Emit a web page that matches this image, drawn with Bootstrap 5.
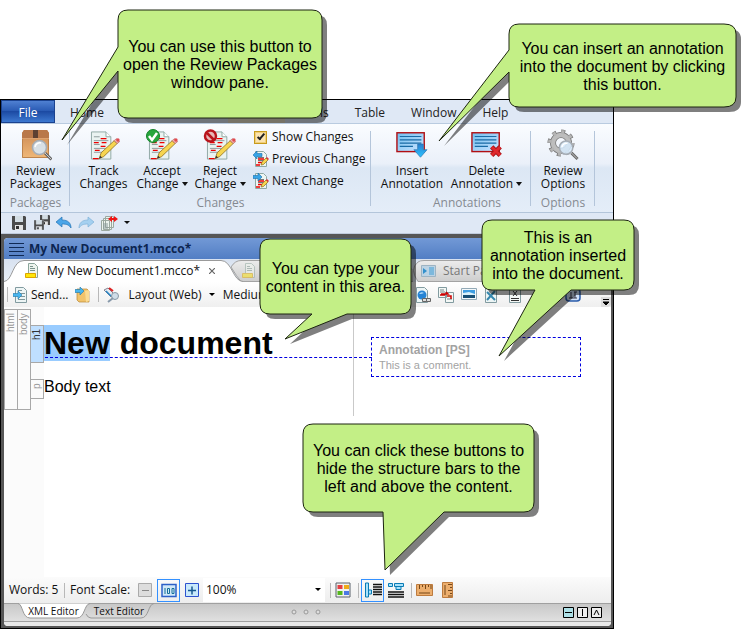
<!DOCTYPE html>
<html lang="en">
<head>
<meta charset="utf-8">
<meta name="viewport" content="width=device-width, initial-scale=1">
<title>My New Document1.mcco*</title>
<link href="https://cdn.jsdelivr.net/npm/bootstrap@5.3.0/dist/css/bootstrap.min.css" rel="stylesheet">
<style>
body{font:12px/16px "Open Sans","Noto Sans",sans-serif;color:#111;background:#fff}
button,select{font:inherit;color:inherit;background:none;border:0;padding:0}
svg{flex:none;display:block}
.stage{min-height:100vh;padding:99px 137px 0 0}
.app{border:1px solid #000;min-height:calc(100vh - 99px);background:#565656}
.menu-bar{background:#dfe8f5;height:23px;gap:26px}
.menu-bar .nav-link{padding:0;line-height:26px;color:#222}
.menu-bar .file-tab{width:54px;text-align:center;color:#fff;background:linear-gradient(#4f80d2,#2b5cb5 45%,#1c4aa3 50%,#3c78d0);border:1px solid #1b428f;line-height:24px}
.menu-bar .home-tab{margin-left:-11px}
.menu-bar .tab-current{width:57px;background:#efe6cf;margin-left:98px;margin-right:-12px}
.ribbon{border-top:1px solid #b9cbe0;border-bottom:1px solid #b3c5da;height:90px;background:linear-gradient(#fafcff,#eaf0f9 45%,#dce7f4 50%,#e4edf8)}
.group{position:relative;display:flex;flex-direction:column;height:100%;padding-top:5px}
.group::after{content:"";position:absolute;right:0;top:7px;bottom:6px;width:1px;background:#b4c5da}
.group-name{color:#858a91;text-align:center;line-height:16px}
.tool{display:flex;flex-direction:column;align-items:center;line-height:13px;white-space:nowrap;height:66px}
.tool span{padding-top:3px}
.caret{display:inline-block;border:3px solid transparent;border-top:4px solid #111;border-bottom:0;vertical-align:2px;margin-left:3px}
.small-list{margin-top:-3px}
.small-tool{display:flex;align-items:center;gap:3px;height:22px;line-height:22px;white-space:nowrap}
.small-tool input{appearance:none;width:13px;height:13px;margin:0 2px 0 1px;border:1px solid #c79a1d;outline:1px solid #f0cf7a;outline-offset:-2px;background:#fbe3b0;position:relative}
.small-tool input::after{content:"";position:absolute;left:4px;top:0;width:4px;height:8px;border:solid #222;border-width:0 2px 2px 0;transform:rotate(40deg)}
.quick{background:#dfe8f5;height:21px;border-bottom:1px solid #c0cbdc}
.doc{margin:4px 2px 2px 3px;display:flex;flex-direction:column;flex:1;background:#fff;border-radius:4px;overflow:hidden}
.doc-title{background:linear-gradient(#7299d6,#527ec4);height:21px;font-weight:700;color:#0c2550;line-height:21px;gap:5px}
.doc-tabs{height:23px;background:linear-gradient(#d8e2f0,#e8eef6)}
.doc-tab{position:relative;height:23px;display:flex;align-items:center}
.doc-tab>*,.edit-tab>span{position:relative}
.doc-tab>.shape,.edit-tab>.shape{position:absolute;left:0;top:0;width:100%;height:100%}
.toolbar{height:25px;background:linear-gradient(#fff,#efefef)}
.vsep{width:1px;height:15px;background:#b8b8b8;flex:none}
.editor{flex:1;display:grid;grid-template-columns:40px 309px 1fr;font-family:"Liberation Sans",Arial,sans-serif}
.bars{background:#fbfbfb;display:grid;grid-template-columns:13px 13px 14px;grid-template-rows:2px 101px 1fr}
.bar{border:1px solid #a8a8a8;writing-mode:vertical-rl;transform:rotate(180deg);font-size:10px;line-height:12px;color:#999;text-align:right;padding:3px 0;grid-row:2;margin-right:-1px}
.inner-bars{grid-row:2;padding-top:16px;display:flex;flex-direction:column;gap:16px}
.inner-bars .bar{margin-right:0}
.bar-h1{background:#bfdfff;height:38px;color:#333}
.bar-p{height:20px}
h1{font-size:32px;line-height:36px;font-weight:700;margin:18px 0 17px;color:#000}
.picked{background:#99ccff;color:#000;display:inline-block;margin-right:1px}
.body-text{font-size:16px;line-height:18px;margin:0;color:#000}
.margin-col{border-left:1px solid #c9c9c9;height:109px;padding:30px 30px 0 17px}
.note{border:1px dashed #0000e0;height:40px;padding:5px 7px;position:relative;color:#a3a3a3;font-size:11px;line-height:15px}
.note::before{content:"";position:absolute;right:100%;top:19px;width:327px;border-top:1px dashed #0000e0}
.note strong{font-size:12px;display:block}
.status{height:26px;background:linear-gradient(#fbfbfb,#ededed)}
.on{border:1px solid #3390ff;height:23px;width:23px;display:flex;align-items:center;justify-content:center}
.zoom-box{width:122px;height:24px;background:#fff}
.zoom-box select{appearance:none;flex:1;outline:0;padding-left:3px}
.edit-bar{height:19px;background:linear-gradient(#c8c8c8,#e0e0e0);border-top:1px solid #a0a0a0;border-bottom:1px solid #a0a0a0;font-size:10px}
.edit-tab{height:15px;width:69px;line-height:15px}
.grip{margin-left:141px}
.foot{height:4px;background:#e9e9e9}
.callout-box{position:absolute;display:flex;align-items:center;justify-content:center;text-align:center;font:16px/18px "Liberation Sans",Arial,sans-serif;color:#000;white-space:nowrap;z-index:5}
.callout-box svg{position:absolute;left:0;top:0;overflow:visible;width:1px;height:1px}
.callout-box p{position:relative;margin:0;padding-top:2px}
.callout-box .shade{fill:#000;fill-opacity:.5;transform:translate(5px,5px)}
.callout-box .face{fill:#c3ef86;stroke:#1c2410;stroke-width:1}
.c1{left:118px;top:10px;width:204px;height:108px}
.c2{left:509px;top:24px;width:227px;height:83px}
.c3{left:260px;top:239px;width:151px;height:75px}
.c4{left:482px;top:220px;width:152px;height:70px}
.c5{left:303px;top:424px;width:231px;height:88px}
</style>
<script src="https://cdn.jsdelivr.net/npm/bootstrap@5.3.0/dist/js/bootstrap.bundle.min.js"></script>
</head>
<body>
<svg width="0" height="0" class="position-absolute">
<defs>
<linearGradient id="gBox" x2="0" y2="1"><stop stop-color="#c98752"/><stop offset="1" stop-color="#f0b878"/></linearGradient>
<linearGradient id="gScr" x2="1" y2="1"><stop stop-color="#6fc0f0"/><stop offset="1" stop-color="#cfe4ff"/></linearGradient>
<linearGradient id="gArr" x2="0" y2="1"><stop stop-color="#2a7fd0"/><stop offset="1" stop-color="#2bc4ff"/></linearGradient>
<linearGradient id="gTab" x2="0" y2="1"><stop stop-color="#ececec"/><stop offset="1" stop-color="#cdcdcd"/></linearGradient>
<symbol id="page" viewBox="0 0 32 32"><path d="M1.500 2.500h15l5 5v23h-20z" fill="#eaf3f1" stroke="#8fa8a4"/><path d="M16.500 2.500v5h5" fill="#fff" stroke="#8fa8a4"/><path d="M4 7.500h6M4 11.500h15M4 15.500h6M4 19.500h12M4 23.500h10" stroke="#8d9a9c"/><path d="M11 9.500h6M4 13.500h5M12 13.500h5M11 17.500h5M3 30h6M5 21.500h5" stroke="#e00" stroke-width="1.300"/><path d="M9.500 30l2-6L25 11.500l3 3L14 28z" fill="#f6d550" stroke="#8d6b1c" stroke-width=".8"/><path d="M25 11.500l2-2 3.500 3-2.500 2z" fill="#f5b9b2" stroke="#a44" stroke-width=".6"/><circle cx="28.800" cy="10.800" r="1.800" fill="#e04a50"/><path d="M9.500 30l1-3 2 1.800z" fill="#333"/></symbol>
<symbol id="spage" viewBox="0 0 16 16"><path d="M2.500.5h8l3 3v12h-11z" fill="#edf5f3" stroke="#8fa8a4"/><path d="M5 6.500h6M5 9.500h5" stroke="#777"/><path d="M5 8h6M5 11.500h4M3 14h4" stroke="#e00" stroke-width="1.300"/><path d="M8 14l1-3 4-4 2 2-4.500 4.500z" fill="#f6d550" stroke="#8d6b1c" stroke-width=".7"/><path d="M13 7l1-1 2 2-1 1z" fill="#d33"/></symbol>
<symbol id="screen" viewBox="0 0 34 30"><rect x="1" y="1" width="29" height="20" fill="url(#gScr)" stroke="#b00f14" stroke-width="1.500"/><path d="M4 5h23M4 8.500h23M4 12h23M4 15.500h14" stroke="#196ba5" stroke-width="1.200"/></symbol>
<symbol id="disk" viewBox="0 0 14 14"><path d="M0 0h13l1 1v13H1l-1-1z" fill="#4b4b4b"/><path d="M3 0h8v6H3z" fill="#d3dde3"/><path d="M3 9h8v5H3z" fill="#e4e4e4"/><path d="M4 10h3v3H4z" fill="#333"/></symbol>
<symbol id="tdoc" viewBox="0 0 14 16"><path d="M3.500.5h6l3 3v11h-9z" fill="#eef4ee" stroke="#8ba59b"/><path d="M5 3.500h3M5 5.500h5M5 7.500h5" stroke="#79928b"/><path d="M.5 10.500h10v4H.5z" fill="#ffe60a" stroke="#dca600"/></symbol>
<symbol id="lens" viewBox="0 0 22 22"><path d="M14 14l6.500 6.500" stroke="#666" stroke-width="3"/><path d="M14 14l6 6" stroke="#ccc"/><circle cx="8.500" cy="8.500" r="7" fill="#d6eafb" fill-opacity=".85" stroke="#a6adb5" stroke-width="1.600"/><path d="M4 8a5 5 0 0 1 6-4" stroke="#fff" fill="none" stroke-width="1.500"/></symbol>
</defs>
</svg>
<div class="stage position-relative">
<main class="app d-flex flex-column">
  <nav class="menu-bar d-flex" aria-label="Main menu">
    <a class="nav-link file-tab" href="#">File</a>
    <a class="nav-link home-tab" href="#">Home</a>
    <a class="nav-link tab-current" href="#" aria-label="Review"></a>
    <a class="nav-link" href="#">Tools</a>
    <a class="nav-link" href="#">Table</a>
    <a class="nav-link" href="#">Window</a>
    <a class="nav-link" href="#">Help</a>
  </nav>
  <section class="ribbon d-flex" aria-label="Ribbon">
    <div class="group" style="width:69px">
      <button class="tool" type="button"><svg width="32" height="32" viewBox="0 0 32 32"><path d="M2 4l2-3h23l2 3v25H2z" fill="url(#gBox)"/><path d="M2 4l2-3h23l2 3v5H2z" fill="#b9784a"/><path d="M13 1h5v9h-5z" fill="#5d4032"/><path d="M2 9.500h27" stroke="#dda270"/><path d="M2.500 10v18.500h26V10" fill="none" stroke="#bd834c"/><use href="#lens" x="11" y="10" width="22" height="22"/></svg><span>Review<br>Packages</span></button>
      <div class="group-name">Packages</div>
    </div>
    <div class="group" style="width:301px">
      <div class="d-flex">
        <button class="tool" type="button" style="width:67px"><svg width="32" height="32" viewBox="-2 0 32 32"><use href="#page" width="31" height="32"/></svg><span>Track<br>Changes</span></button>
        <button class="tool" type="button" style="width:50px"><svg width="34" height="32" viewBox="0 0 34 32"><use href="#page" x="3" width="31" height="32"/><circle cx="8" cy="7" r="6.500" fill="#27a63c" stroke="#14802a"/><path d="M4 7l3 4 5-7" fill="none" stroke="#fff" stroke-width="2.500"/></svg><span>Accept<br>Change<i class="caret"></i></span></button>
        <button class="tool" type="button" style="width:66px"><svg width="34" height="32" viewBox="0 0 34 32"><use href="#page" x="3" width="31" height="32"/><circle cx="7.500" cy="7" r="5.500" fill="#e8b7b7" stroke="#b9141c" stroke-width="2.500"/><path d="M4 4l7 7" stroke="#b9141c" stroke-width="2.500"/></svg><span>Reject<br>Change<i class="caret"></i></span></button>
        <div class="small-list">
          <label class="small-tool"><input type="checkbox" checked>Show Changes</label>
          <button class="small-tool" type="button"><svg width="16" height="16" viewBox="0 0 16 16"><use href="#spage"/><path d="M0 4l4-4v2.500h5v3H4V8z" fill="#37a4e6" stroke="#1c71ad" stroke-width=".6"/></svg>Previous Change</button>
          <button class="small-tool" type="button"><svg width="16" height="16" viewBox="0 0 16 16"><use href="#spage"/><path d="M9 4L5 0v2.500H0v3h5V8z" fill="#37a4e6" stroke="#1c71ad" stroke-width=".6"/></svg>Next Change</button>
        </div>
      </div>
      <div class="group-name">Changes</div>
    </div>
    <div class="group" style="width:160px">
      <div class="d-flex">
        <button class="tool" type="button" style="width:82px"><svg width="32" height="32" viewBox="0 0 34 32"><use href="#screen" y="2" width="34" height="30"/><path d="M23 15h6v6h4l-7 8-7-8h4z" fill="url(#gArr)" stroke="#2872ae" stroke-width=".7"/></svg><span>Insert<br>Annotation</span></button>
        <button class="tool" type="button" style="width:67px"><svg width="32" height="32" viewBox="0 0 34 32"><use href="#screen" y="2" width="34" height="30"/><path d="M22 18l9 9M31 18l-9 9" stroke="#a51317" stroke-width="5"/><path d="M22 18l9 9M31 18l-9 9" stroke="#e0282d" stroke-width="3"/></svg><span>Delete<br>Annotation<i class="caret"></i></span></button>
      </div>
      <div class="group-name ps-3 ms-3">Annotations</div>
    </div>
    <div class="group" style="width:64px">
      <button class="tool" type="button"><svg width="32" height="32" viewBox="0 0 32 32"><circle cx="14" cy="14" r="11.500" fill="none" stroke="#777" stroke-width="4" stroke-dasharray="4 5"/><circle cx="14" cy="14" r="8" fill="none" stroke="#777" stroke-width="6"/><circle cx="14" cy="14" r="8" fill="none" stroke="#bdbdbd" stroke-width="4.500"/><circle cx="14" cy="14" r="11" fill="none" stroke="#b4b4b4" stroke-width="4" stroke-dasharray="3 5.640"/><use href="#lens" x="11" y="10" width="21" height="22"/></svg><span>Review<br>Options</span></button>
      <div class="group-name">Options</div>
    </div>
  </section>
  <div class="quick d-flex align-items-center" style="padding-left:11px;gap:6px">
    <button type="button" aria-label="Save"><svg width="14" height="14"><use href="#disk"/></svg></button>
    <button type="button" aria-label="Save all"><svg width="18" height="16" viewBox="-2 0 18 16"><use href="#disk" x="6" y="0" width="10" height="10"/><use href="#disk" x="0" y="5" width="10" height="10" stroke="#dfe8f5" stroke-width=".5"/></svg></button>
    <button type="button" aria-label="Undo"><svg width="16" height="14" viewBox="0 0 16 14"><path d="M0 6l6-5v3c6 0 9 3 9 8-2-3-4-4-9-4v3z" fill="#4aa5e8" stroke="#2373b5" stroke-width=".7"/></svg></button>
    <button type="button" aria-label="Redo"><svg width="16" height="14" viewBox="0 0 16 14"><path d="M16 6l-6-5v3c-6 0-9 3-9 8 2-3 4-4 9-4v3z" fill="#a5d0f0" stroke="#7fb2d9" stroke-width=".7"/></svg></button>
    <button type="button" aria-label="Close all"><svg width="18" height="16" viewBox="0 0 18 16"><path d="M5.500 1.500h8v11h-8zM3.500 3.500h8v11h-8zM1.500 5.500h8v10h-8z" fill="#edf3ee" stroke="#9ba8a0"/><path d="M3 9h5M3 11h5M3 13h5" stroke="#899"/><path d="M8 4l4-3v2h2V1l4 3-4 3V5h-2v2z" fill="#f01515"/></svg></button>
    <button type="button" aria-label="More commands"><svg width="6" height="4"><path d="M0 0h6L3 3z" fill="#111"/></svg></button>
  </div>
  <article class="doc">
    <div class="doc-title d-flex align-items-center"><svg width="20" height="14" viewBox="0 0 20 14"><path d="M5 1.500h15M5 5.500h15M5 9.500h15M5 13.500h15" stroke="#102a55"/></svg><span>My New Document1.mcco*</span></div>
    <div class="doc-tabs d-flex" role="tablist">
      <button class="doc-tab" type="button" role="tab" style="width:227px;padding-left:21px;padding-right:16px;z-index:2"><svg class="shape overflow-visible" viewBox="0 0 227 23" preserveAspectRatio="none"><path d="M0 22.500C9 22 8 1.500 20 1.500h197c11 0 12 21 22 21v.5H0z" fill="#fff"/><path d="M0 22.500C9 22 8 1.500 20 1.500h197c11 0 12 21 22 21" fill="none" stroke="#9a9a9a"/></svg><svg width="14" height="16"><use href="#tdoc"/></svg><span class="ms-2">My New Document1.mcco*</span><svg width="6" height="6" viewBox="0 0 6 6" class="ms-auto"><path d="M0 0l6 6M6 0L0 6" stroke="#666" stroke-width="1.200"/></svg></button>
      <button class="doc-tab" type="button" role="tab" aria-label="Document" style="width:182px;padding-left:11px"><svg class="shape" viewBox="0 0 182 23" preserveAspectRatio="none"><path d="M0 8Q4 1.500 10 1.500H172l10 10v11H10Q6 18 0 8z" fill="url(#gTab)" stroke="#a3a3a3"/></svg><svg width="14" height="16" opacity=".5"><use href="#tdoc"/></svg></button>
      <button class="doc-tab" type="button" role="tab" style="width:182px;padding-left:8px;color:#777"><svg class="shape" viewBox="0 0 182 23" preserveAspectRatio="none"><path d="M182 22.500H5Q-4 10 5 3q2-1.500 6-1.500h160q11 0 11 21z" fill="url(#gTab)" stroke="#a3a3a3"/></svg><svg width="15" height="12" viewBox="0 0 15 12"><path d="M.5.500h14v11H.5z" fill="#bcd3e4" stroke="#9db3c2"/><path d="M2 3l4 3-4 3z" fill="#3290cc"/><path d="M8 2h5v8H8z" fill="#7db8dc"/></svg><span style="margin-left:7px">Start Page</span></button>
    </div>
    <div class="toolbar d-flex align-items-center">
      <span class="vsep" style="margin-left:3px"></span>
      <button type="button" class="d-flex align-items-center gap-1" style="margin-left:5px"><svg width="14" height="16" viewBox="0 0 14 16"><path d="M2.500.5h8l3 3v12h-11z" fill="#edf5f5" stroke="#829ba0"/><path d="M5 3.500h4M5 6.500h7M5 9.500h7M5 12.500h7" stroke="#7f9699"/><path d="M9 8L5 4v2.500H0v3h5V12z" fill="#48b5ee" stroke="#2177a8" stroke-width=".6"/></svg>Send...</button>
      <button type="button" aria-label="Open folder" style="margin-left:7px"><svg width="16" height="16" viewBox="0 0 16 16"><path d="M2 2h10l2 2v11H4l-2-2z" fill="#f1c36b" stroke="#b88635" stroke-width=".7"/><path d="M10 4l4-1v11l-3 1z" fill="#fadb93"/><path d="M9 4L5 0v2.500H0v3h5V8z" fill="#48b5ee" stroke="#2177a8" stroke-width=".6"/></svg></button>
      <span class="vsep" style="margin-left:7px"></span>
      <button type="button" aria-label="Layout settings" class="ms-1"><svg width="17" height="16" viewBox="0 0 17 16"><path d="M1 3l4-2 6 6-3 3z" fill="#e6ebf0" stroke="#667" stroke-width=".8"/><path d="M6 1l4 3" stroke="#d22" stroke-width="2"/><path d="M3 4l5 5" stroke="#2b88c8" stroke-width="1.500"/><circle cx="12" cy="9" r="3.500" fill="#cfdde8" stroke="#8798a5"/><path d="M10 11l-5 4" stroke="#89a" stroke-width="2"/></svg></button>
      <button type="button" style="margin-left:8px">Layout (Web)</button><svg width="6" height="4" style="margin-left:7px"><path d="M0 0h6L3 3z"/></svg>
      <button type="button" style="margin-left:8px">Medium</button>
      <span class="flex-fill"></span>
      <div class="d-flex align-items-center" style="gap:7px;margin-right:20px">
        <svg width="16" height="16" viewBox="0 0 16 16"><path d="M1.500.5h8l3 3v12h-11z" fill="#edf5f5" stroke="#829ba0"/><circle cx="7" cy="8" r="4.500" fill="#2583d4"/><path d="M4 7q2-3 5-1-2 1-5 1" fill="#b9e2ff"/><path d="M7.500 11.500h4v3h-4zM11.500 11.500h4v3h-4z" fill="#ddd" stroke="#666"/></svg>
        <svg width="16" height="16" viewBox="0 0 16 16"><path d="M.5.500h8v10h-8zM7.500 5.500h8v10h-8z" fill="#f4f8f6" stroke="#829ba0"/><path d="M2 3h4M2 5h5M9 12h5" stroke="#788"/><path d="M3 7h7l-2-2M9 9h4v3M2 8h5" fill="none" stroke="#c00" stroke-width="1.500"/></svg>
        <svg width="16" height="16" viewBox="0 0 16 16"><path d="M.5 1.500h15v11H.5z" fill="#f4f8fa" stroke="#92a9b6"/><path d="M2 3h12v8H2z" fill="#3d9de2"/><path d="M2 6l6-1 6 2v1H2z" fill="#d8f0fa"/><path d="M2 8h12v3H2z" fill="#174e74"/></svg>
        <svg width="14" height="16" viewBox="0 0 14 16"><path d="M1.500.5h8l3 3v12h-11z" fill="#edf5f5" stroke="#829ba0"/><path d="M3 5l8 8M11 4l-8 9" stroke="#3587ae" stroke-width="2"/></svg>
        <svg width="16" height="16" viewBox="-4 0 16 16"><path d="M.5.500h11v15H.5z" fill="#f4f8f6" stroke="#829ba0"/><path d="M4 4l4 5M8 4L4 9M2 11.500h8M2 13.500h8" stroke="#333"/></svg>
        <span></span>
        <svg width="16" height="16" viewBox="0 0 16 16"><path d="M.5.500h11v15H.5z" fill="#f4f8f6" stroke="#829ba0"/></svg>
        <span></span>
        <svg width="16" height="14" viewBox="0 0 16 14"><rect x="1" y="1" width="14" height="12" rx="3" fill="#cfe0f7" stroke="#2b5cab" stroke-width="1.500"/><path d="M6 4v6M4 10h8M10 4v6M9 4h3" stroke="#334"/></svg>
      </div>
      <svg width="10" height="10" viewBox="0 0 10 10" class="align-self-end"><path d="M0 0h10v6q0 4-4 4H0z" fill="#ddd"/><path d="M2 2.500h6M2 5h6L5 8z" fill="#000" stroke="#000"/></svg>
    </div>
    <div class="editor">
      <div class="bars">
        <div class="bar">html</div><div class="bar">body</div>
        <div class="inner-bars"><div class="bar bar-h1">h1</div><div class="bar bar-p">p</div></div>
      </div>
      <div><h1><span class="picked">New</span> document</h1><p class="body-text">Body text</p></div>
      <aside class="margin-col"><div class="note"><strong>Annotation [PS]</strong>This is a comment.</div></aside>
    </div>
    <div class="status d-flex align-items-center">
      <span style="margin-left:5px;width:55px">Words: 5</span><span class="vsep"></span>
      <span style="margin-left:5px;width:67px">Font Scale:</span>
      <button type="button" aria-label="Smaller"><svg width="16" height="16"><path d="M1.500 1.500h13v13h-13z" fill="#ddd" stroke="#aaa"/><path d="M5 8.500h7" stroke="#888"/></svg></button>
      <button type="button" class="on" aria-label="Reset scale" style="margin-left:4px"><svg width="16" height="15"><path d="M1 1.500h14v12H1z" fill="#d1e9f8" stroke="#2d60c8" stroke-width="1.500"/><path d="M4 5v6M6.500 5.500h2v5h-2zM11 5.500h2v5h-2z" fill="none" stroke="#146f98"/></svg></button>
      <button type="button" aria-label="Larger" style="margin-left:4px"><svg width="16" height="16"><path d="M1.500 1.500h13v13h-13z" fill="#c9e9fb" stroke="#2d52cf"/><path d="M4 8.500h8M8 4.500v8" stroke="#175890" stroke-width="1.500"/></svg></button>
      <label class="zoom-box d-flex align-items-center" style="margin-left:3px;margin-right:5px"><select aria-label="Font scale"><option>100%</option></select><svg width="6" height="4" style="margin-right:4px"><path d="M0 0h6L3 3z"/></svg></label>
      <span class="vsep"></span>
      <button type="button" aria-label="Colors" style="margin:0 7px 0 4px"><svg width="16" height="16"><path d="M1 1h14v14H1z" fill="#f1f1ef" stroke="#59616a"/><path d="M2.500 3h5v4h-5z" fill="#e43f43"/><path d="M9 3h5v4H9z" fill="#efab19"/><path d="M2.500 9h5v4h-5z" fill="#55b71c"/><path d="M9 9h5v4H9z" fill="#4b78e5"/></svg></button>
      <span class="vsep"></span>
      <button type="button" class="on" aria-label="Left structure bars" style="margin-left:2px"><svg width="18" height="16"><path d="M1.500 1v14h3V1zM4.500 8h3v4h-3z" fill="#a8e1fb" stroke="#087bb5"/><path d="M9 2.500h9M9 5h9M9 7.500h9M9 10h9M9 12.500h9" stroke="#111" stroke-width="1.500"/></svg></button>
      <button type="button" aria-label="Top structure bars" style="margin:0 7px 0 4px"><svg width="16" height="16"><path d="M.5 1.500h4v3h-4zM6.500 1.500h9v3h-9zM8 4.500h5v3H8z" fill="#a8e1fb" stroke="#087bb5"/><path d="M0 10h16M0 12.500h16M0 15h16" stroke="#111" stroke-width="1.500"/></svg></button>
      <span class="vsep"></span>
      <button type="button" aria-label="Horizontal ruler" class="ms-1"><svg width="17" height="12"><path d="M.5.500h16v11H.5z" fill="#ecae6d" stroke="#bd7b3e"/><path d="M3.500 1v4M6.500 1v2M9.500 1v4M12.500 1v2M15 1v4M3 9h11" stroke="#754719"/></svg></button>
      <button type="button" aria-label="Vertical ruler" style="margin-left:9px"><svg width="12" height="16"><path d="M.5.500h10v15H.5z" fill="#ecae6d" stroke="#bd7b3e"/><path d="M10 2.500H6M10 5.500H8M10 8.500H6M10 11.500H8M10 14H6M3 3v10" stroke="#754719"/></svg></button>
    </div>
    <div class="edit-bar d-flex" role="tablist">
      <button class="edit-tab position-relative" type="button" role="tab" style="margin-left:15px"><svg class="shape overflow-visible" viewBox="0 0 69 15"><path d="M-1-.5C4 0 3 14 11 14h47C66 14 65 0 71-.5z" fill="#fff"/><path d="M-1-.5C4 0 3 14 11 14h47C66 14 65 0 71-.5" fill="none" stroke="#999"/></svg><span>XML Editor</span></button>
      <button class="edit-tab position-relative" type="button" role="tab" style="width:62px"><svg class="shape overflow-visible" viewBox="0 0 62 15"><path d="M-2 10Q0 14 3 14h50C61 14 60 0 66-.5" fill="none" stroke="#999"/></svg><span>Text Editor</span></button>
      <svg width="30" height="17" viewBox="0 0 30 17" class="grip me-auto"><g fill="#ddd" stroke="#999"><circle cx="3" cy="8" r="2"/><circle cx="15" cy="8" r="2"/><circle cx="27" cy="8" r="2"/></g></svg>
      <div class="d-flex align-items-center" style="gap:3px;margin-right:9px">
        <button type="button" aria-label="Split horizontally"><svg width="11" height="11"><path d="M.5.500h10v10H.5z" fill="#addfe6" stroke="#000"/><path d="M2 5.500h7" stroke="#000"/></svg></button>
        <button type="button" aria-label="Split vertically"><svg width="11" height="11"><path d="M.5.500h10v10H.5zM5.500 2v7" fill="#eee" stroke="#000"/></svg></button>
        <button type="button" aria-label="Collapse"><svg width="11" height="11"><path d="M.5.500h10v10H.5z" fill="#eee" stroke="#000"/><path d="M3 8l2.500-5L8 8" fill="none" stroke="#000"/></svg></button>
      </div>
    </div>
    <div class="foot"></div>
  </article>
</main>
<div class="callout-box c1"><svg><path class="shade" d="M10 0H194Q204 0 204 10V98Q204 108 194 108H10Q0 108 0 98V61L-56 130L0 37V10Q0 0 10 0z"/><path class="face" d="M10 0H194Q204 0 204 10V98Q204 108 194 108H10Q0 108 0 98V61L-56 130L0 37V10Q0 0 10 0z"/></svg><p>You can use this button to<br>open the Review Packages<br>window pane.</p></div>
<div class="callout-box c2"><svg><path class="shade" d="M10 0H215Q227 0 227 10V73Q227 83 215 83H10Q0 83 0 73V48L-70 117L0 26V10Q0 0 10 0z"/><path class="face" d="M10 0H215Q227 0 227 10V73Q227 83 215 83H10Q0 83 0 73V48L-70 117L0 26V10Q0 0 10 0z"/></svg><p>You can insert an annotation<br>into the document by clicking<br>this button.</p></div>
<div class="callout-box c3"><svg><path class="shade" d="M10 0H141Q151 0 151 10V65Q151 75 141 75H87L25 100L52 75H10Q0 75 0 65V10Q0 0 10 0z"/><path class="face" d="M10 0H141Q151 0 151 10V65Q151 75 141 75H87L25 100L52 75H10Q0 75 0 65V10Q0 0 10 0z"/></svg><p>You can type your<br>content in this area.</p></div>
<div class="callout-box c4"><svg><path class="shade" d="M10 0H142Q152 0 152 10V60Q152 70 142 70H89L17 136L53 70H10Q0 70 0 60V10Q0 0 10 0z"/><path class="face" d="M10 0H142Q152 0 152 10V60Q152 70 142 70H89L17 136L53 70H10Q0 70 0 60V10Q0 0 10 0z"/></svg><p>This is an<br>annotation inserted<br>into the document.</p></div>
<div class="callout-box c5"><svg><path class="shade" d="M10 0H221Q231 0 231 10V78Q231 88 221 88H141L82 146L80 88H10Q0 88 0 78V10Q0 0 10 0z"/><path class="face" d="M10 0H221Q231 0 231 10V78Q231 88 221 88H141L82 146L80 88H10Q0 88 0 78V10Q0 0 10 0z"/></svg><p>You can click these buttons to<br>hide the structure bars to the<br>left and above the content.</p></div>
</div>
</body>
</html>
